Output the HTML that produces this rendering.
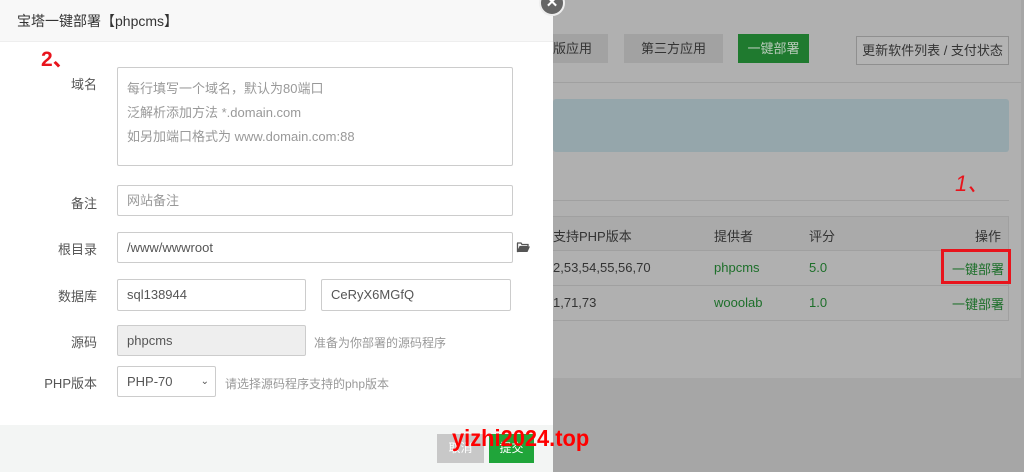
<!DOCTYPE html>
<html><head><meta charset="utf-8"><style>
*{box-sizing:border-box;margin:0;padding:0}
body{width:1024px;height:472px;overflow:hidden;position:relative;background:#a6a6a6;font-family:"Liberation Sans","Noto Sans CJK SC",sans-serif;font-size:13px;color:#555}
.abs{position:absolute}
.panel{left:553px;top:0;width:468px;height:378px;background:#b0b0b0}
.btn{position:absolute;height:29px;line-height:29px;text-align:center;font-size:13px}
.modal{left:0;top:0;width:553px;height:472px;background:#fff}
.hd{left:0;top:0;width:553px;height:42px;background:#f8f8f8;border-bottom:1px solid #eee;font-size:14px;color:#333;line-height:42px;padding-left:17px}
.lbl{position:absolute;width:97px;text-align:right;color:#555;font-size:13px}
.inp{position:absolute;border:1px solid #ccc;border-radius:2px;background:#fff;padding-left:9px;font-size:13px;color:#555}
.ph{color:#999}
.tip{position:absolute;color:#999;font-size:12px}
</style></head><body>
<div class="abs panel"></div>
<div class="btn" style="left:553px;top:34px;width:55px;background:#a2a2a2;color:#333;text-align:left">版应用</div>
<div class="btn" style="left:624px;top:34px;width:99px;background:#a2a2a2;color:#333">第三方应用</div>
<div class="btn" style="left:738px;top:34px;width:71px;background:#1f7a2f;color:#b9cbbb">一键部署</div>
<div class="btn" style="left:856px;top:36px;width:153px;border:1px solid #8f8f8f;background:#b3b3b3;color:#333;line-height:27px">更新软件列表 / 支付状态</div>
<div class="abs" style="left:553px;top:82px;width:468px;height:1px;background:#a0a0a0"></div>
<div class="abs" style="left:553px;top:99px;width:456px;height:53px;background:#95a6ab;border-radius:3px"></div>
<div class="abs" style="left:955px;top:166px;color:#e8141c;font-size:22px;font-style:italic">1、</div>
<div class="abs" style="left:553px;top:200px;width:456px;height:1px;background:#a0a0a0"></div>
<div class="abs" style="left:553px;top:216px;width:456px;height:105px;border:1px solid #a0a0a0;border-left:none"></div>
<div class="abs" style="left:553px;top:217px;width:455px;height:34px;background:#aaa;border-bottom:1px solid #a0a0a0"></div>
<div class="abs" style="left:553px;top:285px;width:455px;height:1px;background:#a0a0a0"></div>
<div class="abs" style="left:553px;top:226px;color:#333">支持PHP版本</div>
<div class="abs" style="left:714px;top:226px;color:#333">提供者</div>
<div class="abs" style="left:809px;top:226px;color:#333">评分</div>
<div class="abs" style="left:975px;top:226px;color:#333">操作</div>
<div class="abs" style="left:553px;top:260px;color:#333">2,53,54,55,56,70</div>
<div class="abs" style="left:714px;top:260px;color:#1d6f2a">phpcms</div>
<div class="abs" style="left:809px;top:260px;color:#1d6f2a">5.0</div>
<div class="abs" style="left:952px;top:259px;color:#1d6f2a">一键部署</div>
<div class="abs" style="left:941px;top:249px;width:70px;height:35px;border:3px solid #e8141c"></div>
<div class="abs" style="left:553px;top:295px;color:#333">1,71,73</div>
<div class="abs" style="left:714px;top:295px;color:#1d6f2a">wooolab</div>
<div class="abs" style="left:809px;top:295px;color:#1d6f2a">1.0</div>
<div class="abs" style="left:952px;top:294px;color:#1d6f2a">一键部署</div>

<div class="abs modal"></div>
<div class="abs hd">宝塔一键部署【phpcms】</div>
<div class="abs" style="left:539px;top:-10px;width:26px;height:26px;border-radius:50%;background:#666;border:2px solid #eee;color:#fff;text-align:center;line-height:22px;font-weight:bold;font-size:15px">✕</div>
<div class="abs" style="left:41px;top:43px;color:#e8141c;font-size:21px;font-weight:bold">2、</div>

<div class="lbl" style="top:74px">域名</div>
<div class="inp" style="left:117px;top:67px;width:396px;height:99px;padding-top:9px;line-height:24px"><span class="ph">每行填写一个域名，默认为80端口<br>泛解析添加方法 *.domain.com<br>如另加端口格式为 www.domain.com:88</span></div>
<div class="lbl" style="top:193px">备注</div>
<div class="inp ph" style="left:117px;top:185px;width:396px;height:31px;line-height:29px">网站备注</div>
<div class="lbl" style="top:239px">根目录</div>
<div class="inp" style="left:117px;top:232px;width:396px;height:31px;line-height:29px">/www/wwwroot</div>
<svg class="abs" style="left:516px;top:241px" width="15" height="12" viewBox="0 0 15 12"><path d="M1 2h4l1 1.5h6v2H4L1.5 11V2z" fill="none" stroke="#555" stroke-width="1.3"/><path d="M4 5.5h10L11.5 11H1.5z" fill="#555"/></svg>
<div class="lbl" style="top:286px">数据库</div>
<div class="inp" style="left:117px;top:279px;width:189px;height:32px;line-height:30px">sql138944</div>
<div class="inp" style="left:321px;top:279px;width:190px;height:32px;line-height:30px">CeRyX6MGfQ</div>
<div class="lbl" style="top:332px">源码</div>
<div class="inp" style="left:117px;top:325px;width:189px;height:31px;line-height:29px;background:#eee">phpcms</div>
<div class="tip" style="left:314px;top:334px">准备为你部署的源码程序</div>
<div class="lbl" style="top:373px">PHP版本</div>
<div class="inp" style="left:117px;top:366px;width:99px;height:31px;line-height:29px">PHP-70<span style="position:absolute;right:6px;font-size:10px">⌄</span></div>
<div class="tip" style="left:225px;top:375px">请选择源码程序支持的php版本</div>

<div class="abs" style="left:0;top:425px;width:553px;height:47px;background:#f3f5f4"></div>
<div class="btn" style="left:437px;top:434px;width:47px;background:#c8c8c8;color:#fff;font-size:12px">取消</div>
<div class="btn" style="left:489px;top:434px;width:45px;background:#20a53a;color:#fff;font-size:12px">提交</div>
<div class="abs" style="left:452px;top:425px;color:#f00;font-size:23px;font-weight:bold;transform:scaleX(0.95);transform-origin:0 0">yizhi2024.top</div>
</body></html>
